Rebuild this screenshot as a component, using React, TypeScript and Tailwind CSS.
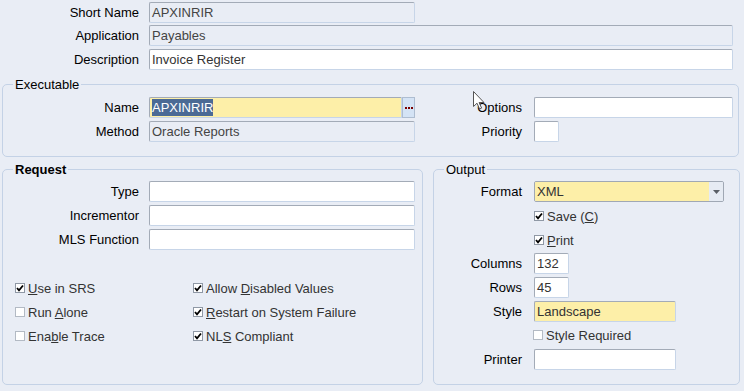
import React from "react";

const fb =
  "h-[21px] flex items-center pl-[2px] border border-t-[#a3abb7] border-l-[#a3abb7] border-b-[#c7d5e8] border-r-[#c7d5e8] rounded-[2px] overflow-hidden whitespace-nowrap";

function Check({ checked, children }: { checked?: boolean; children: React.ReactNode }) {
  return (
    <div className="flex items-center h-[24px] whitespace-nowrap">
      <span
        className={
          "w-[10px] h-[10px] bg-white border flex items-center justify-center " +
          (checked ? "border-[#8f98a5]" : "border-[#b3bac4]")
        }
      >
        {checked && (
          <svg width="8" height="8" viewBox="0 0 8 8">
            <path d="M1 4 L3 6.3 L7 1.5" fill="none" stroke="#000" strokeWidth="1.8" />
          </svg>
        )}
      </span>
      <span className="ml-[3px] text-[#333]">{children}</span>
    </div>
  );
}

function Group({
  title,
  bold,
  className,
  children,
}: {
  title: string;
  bold?: boolean;
  className: string;
  children: React.ReactNode;
}) {
  return (
    <div className={"relative border border-[#c4d2e6] rounded-[5px] " + className}>
      <span
        className={
          "absolute left-[10px] top-[-8px] px-[2px] bg-[#e9edf5] leading-[15px] text-black " +
          (bold ? "font-bold" : "")
        }
      >
        {title}
      </span>
      {children}
    </div>
  );
}

export default function App() {
  return (
    <div className="w-[744px] h-[391px] bg-[#e9edf5] relative overflow-hidden text-[13px] leading-none text-black font-['Liberation_Sans',Arial,sans-serif]">
      {/* Top section */}
      <div className="pt-[2px] flex flex-col">
        <div className="flex items-center h-[21px]">
          <div className="w-[139px] text-right">Short Name</div>
          <div className={fb + " ml-[10px] w-[266px] bg-[#e9edf5] text-[#444]"}>APXINRIR</div>
        </div>
        <div className="flex items-center h-[21px] mt-[2px]">
          <div className="w-[139px] text-right">Application</div>
          <div className={fb + " ml-[10px] w-[584px] bg-[#e9edf5] text-[#444]"}>Payables</div>
        </div>
        <div className="flex items-center h-[21px] mt-[3px]">
          <div className="w-[139px] text-right">Description</div>
          <div className={fb + " ml-[10px] w-[584px] bg-white text-[#333]"}>Invoice Register</div>
        </div>
      </div>

      {/* Executable */}
      <Group title="Executable" className="mt-[14px] ml-[2px] w-[737px] h-[73px] pt-[12px]">
        <div className="flex items-center h-[21px]">
          <div className="w-[136px] text-right">Name</div>
          <div className={fb + " ml-[10px] w-[253px] bg-[#fdefa8] rounded-r-none"}>
            <span className="bg-[#4b6a95] text-white leading-[17px]">APXINRIR</span>
          </div>
          <div className="w-[13px] h-[21px] bg-[#d4e3f5] border border-[#aebdd1] flex items-center justify-center gap-[1px]">
            <span className="w-[2px] h-[2px] bg-[#7a0000]" />
            <span className="w-[2px] h-[2px] bg-[#7a0000]" />
            <span className="w-[2px] h-[2px] bg-[#7a0000]" />
          </div>
          <div className="w-[107px] text-right">Options</div>
          <div className={fb + " ml-[12px] w-[199px] bg-white"} />
        </div>
        <div className="flex items-center h-[21px] mt-[3px]">
          <div className="w-[136px] text-right">Method</div>
          <div className={fb + " ml-[10px] w-[266px] bg-[#e9edf5] text-[#444]"}>Oracle Reports</div>
          <div className="w-[107px] text-right">Priority</div>
          <div className={fb + " ml-[12px] w-[25px] bg-white"} />
        </div>
      </Group>

      {/* Bottom groups */}
      <div className="flex mt-[12px] ml-[2px] gap-[10px]">
        <Group title="Request" bold className="w-[421px] h-[216px] pt-[11px]">
          <div className="flex items-center h-[21px]">
            <div className="w-[136px] text-right">Type</div>
            <div className={fb + " ml-[10px] w-[266px] bg-white"} />
          </div>
          <div className="flex items-center h-[21px] mt-[3px]">
            <div className="w-[136px] text-right">Incrementor</div>
            <div className={fb + " ml-[10px] w-[266px] bg-white"} />
          </div>
          <div className="flex items-center h-[21px] mt-[3px]">
            <div className="w-[136px] text-right">MLS Function</div>
            <div className={fb + " ml-[10px] w-[266px] bg-white"} />
          </div>
          <div className="mt-[26px] pl-[12px] grid grid-cols-[178px_1fr]">
            <Check checked>
              <u>U</u>se in SRS
            </Check>
            <Check checked>
              Allow <u>D</u>isabled Values
            </Check>
            <Check>
              Run <u>A</u>lone
            </Check>
            <Check checked>
              <u>R</u>estart on System Failure
            </Check>
            <Check>
              Ena<u>b</u>le Trace
            </Check>
            <Check checked>
              NL<u>S</u> Compliant
            </Check>
          </div>
        </Group>

        <Group title="Output" className="w-[307px] h-[216px] pt-[11px]">
          <div className="flex items-center h-[21px]">
            <div className="w-[88px] text-right">Format</div>
            <div className="ml-[12px] w-[190px] h-[21px] flex border border-[#a0a8b4] rounded-[2px] overflow-hidden">
              <div className="flex-1 bg-[#fdefa8] flex items-center pl-[2px] text-[#333]">XML</div>
              <div className="w-[14px] bg-[#e6ebf3] flex items-center justify-center">
                <svg width="7" height="4" viewBox="0 0 7 4">
                  <path d="M0 0 L7 0 L3.5 4 Z" fill="#5a5f66" />
                </svg>
              </div>
            </div>
          </div>
          <div className="pl-[100px] mt-[2px]">
            <Check checked>
              Save (<u>C</u>)
            </Check>
            <Check checked>
              <u>P</u>rint
            </Check>
          </div>
          <div className="flex items-center h-[21px] mt-[1px]">
            <div className="w-[88px] text-right">Columns</div>
            <div className={fb + " ml-[12px] w-[35px] bg-white text-[#333]"}>132</div>
          </div>
          <div className="flex items-center h-[21px] mt-[3px]">
            <div className="w-[88px] text-right">Rows</div>
            <div className={fb + " ml-[12px] w-[35px] bg-white text-[#333]"}>45</div>
          </div>
          <div className="flex items-center h-[21px] mt-[3px]">
            <div className="w-[88px] text-right">Style</div>
            <div className={fb + " ml-[12px] w-[142px] bg-[#fdefa8] text-[#333]"}>Landscape</div>
          </div>
          <div className="pl-[99px] mt-[1px]">
            <Check>Style Required</Check>
          </div>
          <div className="flex items-center h-[21px] mt-[2px]">
            <div className="w-[88px] text-right">Printer</div>
            <div className={fb + " ml-[12px] w-[142px] bg-white"} />
          </div>
        </Group>
      </div>

      {/* Mouse cursor */}
      <svg
        className="absolute left-[473px] top-[91px]"
        width="12"
        height="19"
        viewBox="0 0 12 19"
      >
        <path
          d="M0.5 0.5 L0.5 15.5 L4 12.2 L6.6 18 L8.6 17.1 L6.1 11.5 L11 11.5 Z"
          fill="#fff"
          stroke="#555"
          strokeWidth="1"
        />
      </svg>
    </div>
  );
}
